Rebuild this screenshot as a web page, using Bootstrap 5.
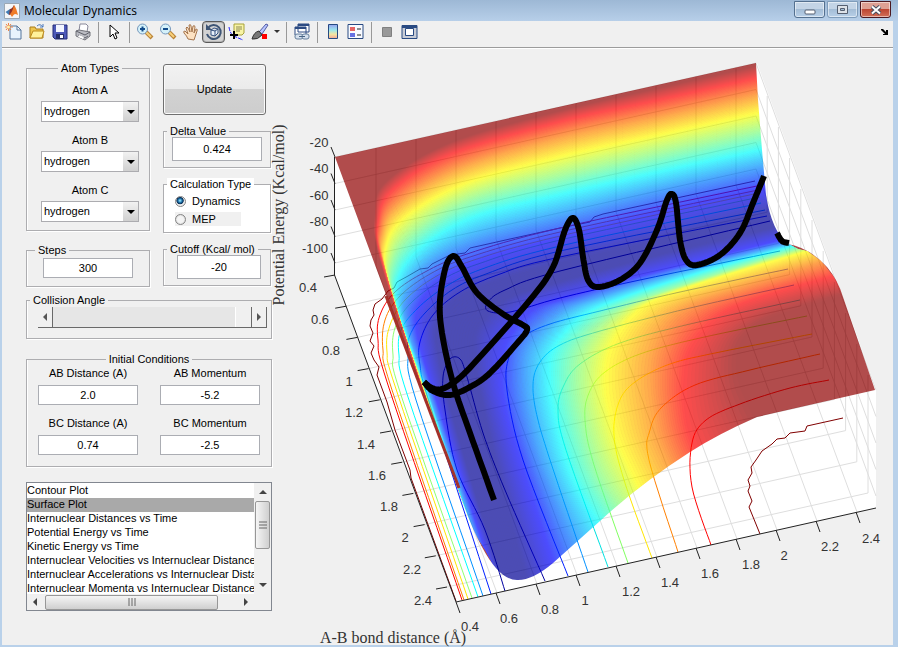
<!DOCTYPE html>
<html lang="en">
<head>
<meta charset="utf-8">
<meta name="viewport" content="width=device-width, initial-scale=1">
<title>Molecular Dynamics</title>
<link href="https://cdn.jsdelivr.net/npm/bootstrap@5.3.0/dist/css/bootstrap.min.css" rel="stylesheet">
<style>
body{font-family:"Liberation Sans",Arial,sans-serif;font-size:11px;line-height:13px;color:#000;background:#b9d1ea}
.win{min-height:100vh;border:solid #b9d1ea;border-width:0 5px 2px 2px;background:#f0f0f0}
.titlebar{height:21px;margin:0 -5px 0 -2px;padding:0 7px 0 4px;background:linear-gradient(#9db8d5,#b7cfe9)}
.titlebar h1{font:12px "Open Sans","Noto Sans",sans-serif;line-height:19px;margin:0}
.wbtn{height:17px;margin-top:1px;padding:0;border:1px solid #54708f;border-radius:0 0 3px 3px;background:linear-gradient(#c3d4e6 50%,#a4bdd6 50%,#b8d0e8);box-shadow:inset 0 0 0 1px #ffffff80;display:flex;align-items:center;justify-content:center;width:31px}
.wbtn.max-w{border-color:#7f9cba}
.wbtn.close-w{border-color:#4b1820;background:linear-gradient(#dea093 48%,#bd4632 50%,#d27059)}
.wbtns{gap:2px}
.tools{height:27px;padding-bottom:4px;border-bottom:1px solid #9c9c9c;box-shadow:0 1px #fff;padding-right:4px}
.tbtn{width:23px;height:22px;padding:0;border:1px solid transparent;border-radius:4px;background:none;display:flex;align-items:center;justify-content:center}
.tbtn.pressed{border:1px solid #5a5a5a;background:#d3d3d3;box-shadow:inset 0 0 0 1px #b5b5b5}
.tsep{width:8px;height:21px;display:flex;justify-content:center}
.tsep::before{content:"";width:1px;background:#999}
.side{width:246px;margin-left:24px;padding-top:14px;flex:none}
.cola{width:124px;gap:13px}.colb{width:108px;gap:10px}
.pairs{padding-right:1px}
.grp{border:1px solid #adadb0;box-shadow:1px 1px #fff,inset 1px 0 #fff;padding:0 11px;min-width:0}
.grp legend{float:none;width:auto;font-size:11px;line-height:12px;margin:0 auto;padding:0 3px;background:#f0f0f0;white-space:nowrap}
.grp legend.start{margin-left:-8px}
.lbl{display:block;text-align:center;line-height:16px}
.atom{padding:0 10px 8px 14px}
.atoms{gap:10px;padding-top:8px}
.atom .lbl{margin-bottom:3px}
.steps{padding:0 16px 8px}.steps .field{margin-top:2px}
.delta{padding:0 8px 6px}.cutoff{padding:0 9px 6px 13px}
.delta legend.start{margin-left:-5px}.cutoff legend.start{margin-left:-10px}
.colb .field{height:24px}
.angles{padding:1px 4px 10px 11px;margin-top:7px}
.conds{display:grid;grid-template-columns:1fr 1fr;gap:10px 22px}
.init{padding-bottom:11px;margin-top:14px}
.pick{width:100%;height:21px;border:1px solid #acacb0;border-radius:0;background:#fff url("data:image/svg+xml,%3Csvg xmlns='http://www.w3.org/2000/svg' width='15' height='19'%3E%3Cdefs%3E%3ClinearGradient id='g' y2='1' x2='0'%3E%3Cstop stop-color='%23f2f2f2'/%3E%3Cstop offset='1' stop-color='%23d0d0d0'/%3E%3C/linearGradient%3E%3C/defs%3E%3Cpath fill='url(%23g)' d='M0 0h15v19H0z'/%3E%3Cpath d='M4 8h8l-4 4z'/%3E%3C/svg%3E") right center no-repeat;appearance:none;padding:0 2px;font-size:11px}
.field{width:100%;height:20px;border:1px solid #abadb3;border-radius:0;background:#fff;text-align:center;font-size:11px;padding:0}
.update{height:51px;margin:2px 5px 0 0;border:1px solid #707070;border-radius:3px;background:linear-gradient(#f2f2f2,#ebebeb 48%,#d2d2d2 49%,#cdcdcd);box-shadow:inset 0 0 0 1px #fafafa;font-size:11px}
.calc{background:#fff;padding-bottom:6px}.calc legend{background:#fff}
.calc label{width:66px;height:14px}
.calc label.off{background:#f0f0f0}
.rd{appearance:none;width:11px;height:11px;margin:0 6px 0 0;border:1px solid #858585;border-radius:50%;background:radial-gradient(#f4f4f4 45%,#c8c8c8)}
.rd:checked{background:radial-gradient(circle at 45% 40%,#7fd3f4 8%,#13639b 30%,#0b2f55 45%,#eee 55%)}
.step{width:15px;height:21px;padding:0;border:0;border-right:1px solid #696969;border-bottom:1px solid #696969;display:flex;align-items:center;justify-content:center;background:#f0f0f0}
.angle{appearance:none;height:21px;margin:0;background:#e6e6e6;border-bottom:1px solid #696969;flex:1;min-width:0}
.angle::-webkit-slider-thumb{appearance:none;width:17px;height:20px;background:#f0f0f0;border-right:1px solid #696969;border-left:1px solid #fff}
.lbox{margin-top:15px;border:1px solid #828790;background:#fff;display:grid;grid-template-columns:1fr 17px;grid-template-rows:111px 16px}
.plist{border:0;outline:0;height:111px;padding:1px 0 0;overflow:hidden;font-size:11px;line-height:14px;min-width:0;width:100%;background:#fff}
.plist::-webkit-scrollbar{display:none}
.plist option{padding:0;min-height:14px;height:14px}
.plist option:checked{background:#a9a9a9 linear-gradient(#a9a9a9,#a9a9a9);color:#000}
.sbar{background:#f0f0f0;display:flex;align-items:center}
.sbar svg{flex:none}
.sthumb{border:1px solid #979797;border-radius:2px;display:flex;align-items:center;justify-content:center}
.vthumb{width:15px;height:48px;background:linear-gradient(90deg,#f5f5f5,#cfcfcf)}
.hthumb{height:15px;background:linear-gradient(#f5f5f5,#cfcfcf)}
.plot{display:block;width:100%;height:auto;overflow:visible}
.plot text{fill:#333}
.tk text{font:13px "Liberation Sans",Arial,sans-serif;text-anchor:middle}
.axname{font:16px "Liberation Serif","Times New Roman",serif;text-anchor:middle}
</style>
</head>
<body>
<div class="win d-flex flex-column">
<header class="titlebar d-flex justify-content-between">
 <div class="d-flex gap-1 align-items-center">
  <svg width="16" height="16" viewBox="0 0 16 16"><path d="M.5.500h15v15H.5z" fill="#f4f6f8" stroke="#9ba8b5"/><path d="M1.500 9 6 6l2 2-3 4z" fill="#3f7ab4"/><path d="M6 6q2 0 4-4l1 4-3 5-3 1z" fill="#8e3127"/><path d="M10 2q2 2 4 10-2-1-3-1t-3 3l-2-3q2-1 4-9z" fill="#ef7c29"/></svg>
  <h1>Molecular Dynamics</h1>
 </div>
 <div class="wbtns d-flex">
  <button class="wbtn" aria-label="Minimize"><svg class="mt-1" width="12" height="6"><rect x="1" y="1" width="10" height="4" rx="1" fill="#fff" stroke="#555f70"/></svg></button>
  <button class="wbtn max-w" aria-label="Maximize"><svg width="11" height="9"><path fill-rule="evenodd" d="M.5.500h10v8H.5zM3.500 3.500h4v2h-4z" fill="#dde2e8" stroke="#555f70"/></svg></button>
  <button class="wbtn close-w" aria-label="Close"><svg width="12" height="10"><path d="m2 1.500 8 7M10 1.500l-8 7" stroke="#444f60" stroke-width="4"/><path d="m2 1.500 8 7M10 1.500l-8 7" stroke="#fff" stroke-width="2"/></svg></button>
 </div>
</header>
<nav class="tools d-flex align-items-center justify-content-between" aria-label="Figure tools">
 <div class="d-flex align-items-center">
 <button class="tbtn" aria-label="New"><svg width="18" height="18"><path d="M5 3h7l4 4v9H5z" fill="#e8f3fd" stroke="#54749c"/><path d="M12 3v4h4z" fill="#fff" stroke="#54749c"/><path d="M3.500 0v8M0 4h8M1 1l5 6M6 1 1 7" stroke="#ed8547"/><circle cx="3.500" cy="4" r="1.500" fill="#fff3ae"/></svg></button>
 <button class="tbtn" aria-label="Open"><svg width="18" height="18"><path d="M2 15V4h5l1 2h7v9z" fill="#eec54e" stroke="#a97c1b"/><path d="m2 15 3-7h11l-2 7z" fill="#fff19b" stroke="#bc8a1d"/><path d="M9 3q3-3 6 1m0-3v3h-3" fill="none" stroke="#4a79bd"/></svg></button>
 <button class="tbtn" aria-label="Save"><svg width="18" height="18"><path d="M2 2h14v14H4l-2-2z" fill="#4d59b8" stroke="#242c78"/><path d="M5 2h8v7H5z" fill="#f2f5ff"/><path d="M5 11h8v5H5z" fill="#262e68"/><path d="M9 12h3v3H9z" fill="#fff"/></svg></button>
 <button class="tbtn" aria-label="Print"><svg width="18" height="18"><path d="m5 8 1-7h6l2 2-1 6z" fill="#fff" stroke="#889"/><path d="m2 8 3-1 11 2v4l-5 4-9-4z" fill="#bbbcc3" stroke="#73747b"/><path d="m2 8 9 4 5-3M4 12l7 3 3-2" fill="none" stroke="#5e6069"/><path d="m5 12 5 2-1 2-5-2z" fill="#fff"/></svg></button>
 <span class="tsep"></span>
 <button class="tbtn" aria-label="Edit plot"><svg width="12" height="17"><path d="M2 1v12l3-3 2 5 2-1-2-5h4z" fill="#fff" stroke="#000"/></svg></button>
 <span class="tsep"></span>
 <button class="tbtn" aria-label="Zoom in"><svg width="18" height="18"><path d="m10 9 6 6" stroke="#bb8437" stroke-width="4"/><path d="m10 9 5 5" stroke="#f7d17b" stroke-width="2"/><circle cx="6.500" cy="6" r="5" fill="#d4f1fa" stroke="#7597bb"/><path d="M4 6h5M6.500 3.500v5" stroke="#134c8b" stroke-width="2"/></svg></button>
 <button class="tbtn" aria-label="Zoom out"><svg width="18" height="18"><path d="m10 9 6 6" stroke="#bb8437" stroke-width="4"/><path d="m10 9 5 5" stroke="#f7d17b" stroke-width="2"/><circle cx="6.500" cy="6" r="5" fill="#d4f1fa" stroke="#7597bb"/><path d="M4 6h5" stroke="#134c8b" stroke-width="2"/></svg></button>
 <button class="tbtn" aria-label="Pan"><svg width="18" height="18"><path d="M6 16q-1-3-4-6-1-2 1-2l3 3-2-6q1-2 2 0l2 4-1-7q2-1 2 1l1 6 1-6q2-1 2 1l-1 6 2-4q2 0 1 2l-2 6-1 3z" fill="#fde2c2" stroke="#a5764e"/></svg></button>
 <button class="tbtn pressed" aria-label="Rotate 3D" aria-pressed="true"><svg width="18" height="18"><path d="M3 5a7 7 0 1 1-1 6" fill="none" stroke="#3e5575" stroke-width="2"/><path d="M1 1v6h6z" fill="#3e5575"/><path d="m6 7 3-2 4 1v4l-3 3-4-1zM6 7l4 1 3-2M10 8v5" fill="#e8f0fa" stroke="#35517e"/></svg></button>
 <button class="tbtn" aria-label="Data cursor"><svg width="18" height="18"><path d="M6 1h10v9l-2 2H6z" fill="#f8f4a5" stroke="#a7a23b"/><path d="M8 4h6M8 6h6M8 8h4" stroke="#8e8a56"/><path d="M1 4q1 8 7 10l7 3" fill="none" stroke="#22f" stroke-dasharray="4 1"/><path d="M2 12h8M6 8v8" stroke="#000" stroke-width="2"/></svg></button>
 <button class="tbtn" aria-label="Brush"><svg width="18" height="18"><path d="m8 9 7-8 2 1-6 9z" fill="#b9c6ff" stroke="#5059a4"/><path d="M8 8q-5 1-7 8 6 1 10-4z" fill="#777" stroke="#333"/><path d="M11 11h5v5h-5z" fill="#f00"/></svg></button>
 <svg width="11" height="6"><path d="M3 1h6L6 4z" fill="#333"/></svg>
 <span class="tsep"></span>
 <button class="tbtn" aria-label="Link plot"><svg width="18" height="18"><path d="M5 1h11v8H5zM2 4h11v8H2z" fill="#fff" stroke="#2c4b83"/><path d="M5 2h11M2 5h11" stroke="#2c4b83" stroke-width="2"/><rect x="2" y="11" width="8" height="5" rx="2" fill="#d5e0ed" stroke="#647f9c"/><rect x="9" y="11" width="7" height="5" rx="2" fill="#d5e0ed" stroke="#647f9c"/><path d="M6 13.500h6" stroke="#476383"/></svg></button>
 <span class="tsep"></span>
 <button class="tbtn" aria-label="Colorbar"><svg width="12" height="18"><defs><linearGradient id="cb" x2="0" y2="1"><stop stop-color="#95a0ed"/><stop offset=".4" stop-color="#9ce8ed"/><stop offset=".7" stop-color="#f5e5a1"/><stop offset="1" stop-color="#f3a699"/></linearGradient></defs><path d="M1.500 1.500h9v14h-9z" fill="url(#cb)" stroke="#264a82"/></svg></button>
 <button class="tbtn" aria-label="Legend"><svg width="17" height="18"><path d="M1 1.500h15v14H1z" fill="#f8faff" stroke="#294a82"/><path d="M3 4h5v4H3z" fill="#e66464"/><path d="M3 10h5v4H3z" fill="#6570e2"/><path d="M10 6h4M10 12h4" stroke="#222"/></svg></button>
 <span class="tsep"></span>
 <button class="tbtn" aria-label="Hide plot tools"><svg width="12" height="12"><path d="M1.500 1.500h9v9h-9z" fill="#999" stroke="#808080"/></svg></button>
 <button class="tbtn" aria-label="Show plot tools"><svg width="17" height="16"><path d="M1 1.500h15v13H1z" fill="#c8ccd6" stroke="#294a82"/><path d="M1 2.500h15" stroke="#294a82" stroke-width="3"/><path d="M4.500 4.500h8v7h-8z" fill="#fff" stroke="#294a82"/></svg></button>
 </div>
 <svg width="9" height="8"><path d="M1 1h2l3 3V2h2v5H3V6h2L1 2z"/></svg>
</nav>
<main class="d-flex align-items-start flex-grow-1">
<section class="side">
 <div class="pairs d-flex justify-content-between">
  <div class="cola d-flex flex-column">
   <fieldset class="grp atom"><legend>Atom Types</legend>
    <div class="atoms d-flex flex-column">
    <div><label class="lbl" for="a">Atom A</label><select class="pick" id="a"><option>hydrogen</option></select></div>
    <div><label class="lbl" for="b">Atom B</label><select class="pick" id="b"><option>hydrogen</option></select></div>
    <div><label class="lbl" for="c">Atom C</label><select class="pick" id="c"><option>hydrogen</option></select></div>
    </div>
   </fieldset>
   <fieldset class="grp steps"><legend class="start">Steps</legend><input class="field" aria-label="Steps" value="300"></fieldset>
  </div>
  <div class="colb d-flex flex-column">
   <button class="update">Update</button>
   <fieldset class="grp delta"><legend class="start">Delta Value</legend><input class="field" aria-label="Delta Value" value="0.424"></fieldset>
   <fieldset class="grp calc"><legend class="start">Calculation Type</legend>
    <label class="d-flex align-items-center mt-1"><input class="rd" type="radio" name="calc" checked>Dynamics</label>
    <label class="d-flex align-items-center mt-1 off"><input class="rd" type="radio" name="calc">MEP</label>
   </fieldset>
   <fieldset class="grp cutoff"><legend class="start">Cutoff (Kcal/ mol)</legend><input class="field" aria-label="Cutoff" value="-20"></fieldset>
  </div>
 </div>
 <fieldset class="grp angles"><legend class="start">Collision Angle</legend>
  <div class="d-flex"><button class="step" aria-label="Decrease"><svg width="6" height="8"><path d="M5 0v8L1 4z" fill="#555"/></svg></button><input class="angle" type="range" min="0" max="180" value="180" aria-label="Collision Angle"><button class="step" aria-label="Increase"><svg width="6" height="8"><path d="M1 0v8l4-4z" fill="#555"/></svg></button></div>
 </fieldset>
 <fieldset class="grp init"><legend>Initial Conditions</legend>
  <div class="conds">
   <div><label class="lbl mb-1" for="abd">AB Distance (A)</label><input class="field" id="abd" value="2.0"></div>
   <div><label class="lbl mb-1" for="abm">AB Momentum</label><input class="field" id="abm" value="-5.2"></div>
   <div><label class="lbl mb-1" for="bcd">BC Distance (A)</label><input class="field" id="bcd" value="0.74"></div>
   <div><label class="lbl mb-1" for="bcm">BC Momentum</label><input class="field" id="bcm" value="-2.5"></div>
  </div>
 </fieldset>
 <div class="lbox">
  <select class="plist" size="8" aria-label="Plot type"><option>Contour Plot</option><option selected>Surface Plot</option><option>Internuclear Distances vs Time</option><option>Potential Energy vs Time</option><option>Kinetic Energy vs Time</option><option>Internuclear Velocities vs Internuclear Distance</option><option>Internuclear Accelerations vs Internuclear Distance</option><option>Internuclear Momenta vs Internuclear Distance</option></select>
  <div class="sbar flex-column"><svg width="15" height="18"><path d="m4 11 4-4 4 4z" fill="#444"/></svg><div class="sthumb vthumb"><svg width="8" height="8"><path d="M0 1h8M0 4h8M0 7h8" stroke="#666"/></svg></div><svg class="mt-auto" width="15" height="18"><path d="m4 7 4 4 4-4z" fill="#444"/></svg></div>
  <div class="sbar"><svg width="18" height="16"><path d="m10 4-4 4 4 4z" fill="#444"/></svg><div class="sthumb hthumb flex-grow-1"><svg width="8" height="8"><path d="M1 0v8M4 0v8M7 0v8" stroke="#666"/></svg></div><svg width="36" height="16"><path d="m26 4 4 4-4 4z" fill="#444"/></svg></div>
  <div class="sbar"></div>
 </div>
</section>
<section class="flex-grow-1">
<svg class="plot" viewBox="272 48 621 597" role="img" aria-label="Potential energy surface with trajectory">
 <defs><clipPath id="surf"><path d="M335 157 756 63 758 100 762 150 766 195Q772 232 788 244 810 248 827 267 838 280 843 297L875 390 757 417Q718 434 690 452 640 484 600 521L553 563Q533 580 518 580 500 581 482 547 470 525 457 486L388 300Z"/></clipPath></defs>
 <path d="M335 157 757 63 876 388V508L456 602 335 275Z" fill="#fff"/>
 <g id="grid" stroke="#dedede" fill="none"></g>
 <g id="contours" fill="none"></g>
 <g id="surface" clip-path="url(#surf)" opacity=".7"><path d="M335 60H880V585H335z" fill="#900000"/></g>
 <path d="M386 296 459 488" stroke="#a5322b" stroke-width="3"/>
 <g id="netOver" stroke="#000" stroke-opacity=".03" fill="none" clip-path="url(#surf)"></g>
 <g id="path" fill="none" stroke="#000" stroke-width="6" stroke-linejoin="round"></g>
 <g id="axes" stroke="#222" fill="none"><path d="M334.500 157V275L456 602 876 508"/></g>
 <g id="ticks" class="tk"></g>
 <text class="axname" transform="translate(284 215) rotate(-90)">Potential Energy (Kcal/mol)</text>
 <text class="axname" x="393" y="643">A-B bond distance (Å)</text>
</svg>
</section>
</main>
</div>
<script>
const NS='http://www.w3.org/2000/svg';
const $=id=>document.getElementById(id);
function add(g,tag,attrs,text){const e=document.createElementNS(NS,tag);for(const k in attrs)e.setAttribute(k,attrs[k]);if(text)e.textContent=text;g.appendChild(e);return e}
const parse=s=>s.trim().split(/\s+/).map(p=>p.split(',').map(Number));
// Catmull-Rom resampling of a list of knots
function smooth(p,n=8){const o=[];for(let i=0;i<p.length-1;i++){const a=p[Math.max(i-1,0)],b=p[i],c=p[i+1],d=p[Math.min(i+2,p.length-1)];for(let j=0;j<n;j++){const t=j/n;o.push([0,1].map(k=>.5*(2*b[k]+(c[k]-a[k])*t+(2*a[k]-5*b[k]+4*c[k]-d[k])*t*t+(3*b[k]-a[k]-3*c[k]+d[k])*t*t*t)))}}o.push(p[p.length-1]);return o}
const line=p=>'M'+p.map(q=>q[0].toFixed(1)+' '+q[1].toFixed(1)).join('L');
// level curves of the surface: jet colour, then knots from the right edge round the bend to the front edge
const K=[
 ['144,0,0','758,66 660,88 560,111 450,143 386,182 375,215 381,262 425,395 461,490'],
 ['255,0,0','758,78 660,100 560,122 450,155 393,190 379,220 383,262 426,396 461,489'],
 ['255,128,0','759,95 660,117 560,138 460,168 400,203 383,232 386,268 427,397 462,493'],
 ['255,255,0','760,113 660,135 560,157 465,184 406,217 387,245 390,283 427,397 463,498'],
 ['128,255,128','761,132 660,154 560,177 470,200 415,232 393,260 394,295 428,397 465,506'],
 ['0,255,255','762,150 660,172 560,195 475,217 425,245 400,275 399,310 429,397 468,516'],
 ['0,128,255','763,168 660,191 560,217 480,238 432,262 409,290 406,320 431,397 474,530'],
 ['0,0,255','765,188 660,213 560,238 490,257 443,278 420,305 418,335 437,400 485,548'],
 ['0,0,150','770,213 660,240 560,263 500,280 458,298 438,325 440,360 460,440 503,582'],
 ['0,0,150','774,228 660,255 560,282 510,298 480,325 475,350 480,390 497,465 528,582'],
 ['0,0,255','782,240 660,271 560,300 530,312 508,340 502,370 505,405 522,465 556,570'],
 ['0,128,255','786,244 680,272 600,297 560,313 530,345 525,375 530,415 545,470 580,552'],
 ['0,255,255','791,247 700,273 620,299 580,318 553,350 550,385 557,425 574,480 606,535'],
 ['128,255,128','797,250 710,277 640,301 605,320 581,350 577,385 584,425 600,475 626,515'],
 ['255,255,0','806,252 725,276 660,298 630,318 610,350 606,385 612,420 622,450 648,505'],
 ['255,128,0','820,262 740,287 690,305 665,325 653,355 651,383 654,410 660,440 678,482'],
 ['255,0,0','832,277 765,296 727,311 703,331 688,355 684,383 685,410 690,435 702,466'],
 ['144,0,0','844,295 795,309 765,320 745,335 737,352 736,370 739,385 745,400 759,430']];
const extend=p=>{const a=p[0],b=p[1],y=p[p.length-2],z=p[p.length-1];return[[a[0]+(a[0]-b[0])*.2,a[1]+(a[1]-b[1])*.2],...p,[z[0]+(z[0]-y[0])*.2,z[1]+(z[1]-y[1])*.2]]};
const S=K.map(k=>({c:k[0].split(',').map(Number),p:extend(smooth(parse(k[1])))}));
const mix=(a,b,t)=>a.map((v,i)=>v+(b[i]-v)*t), N=14;
for(let i=0;i<S.length-1;i++)for(let j=0;j<N;j++){
 const at=t=>S[i].p.map((q,n)=>mix(q,S[i+1].p[n],t)), col=mix(S[i].c,S[i+1].c,(j+.5)/N).map(Math.round);
 add($('surface'),'path',{d:line(at(j/N).concat(at((j+1)/N).reverse()))+'Z',fill:`rgb(${col})`,stroke:`rgb(${col})`});
}
// grid on the floor and both back walls
for(const g of [$('grid'),$('netOver')]){
 let d='';
 for(let i=1;i<11;i++){d+=`M${457+40*i} ${602-9*i}l-121-327v-118`;
  const u=335+11.200*i,v=275+31.200*i;d+=`M${u} ${v}l421-94V${65+31*i}`}
 for(let i=0;i<5;i++)d+=`M335 ${157+26.500*i}l421-94 120 327`;
 add(g,'path',{d});
}
const C=[
 ['#800000','755,181 603,214 594,217 590,222 560,228 510,239 470,248 465,253 450,255 432,264 428,268 420,269 408,276 397,282 394,288 388,291 382,299 375,304 373,310 374,315 371,320 370,326 373,333 370,341 374,346 371,353 374,360 379,367 377,375 387,402 395,430 410,470 411,478 456,601',1],
 ['#f00','757,186 560,228 467,254 425,272 395,292 380,315 378,340 388,385 462,600'],
 ['#ff8000','758,190 560,232 470,257 430,274 400,296 385,320 383,350 392,390 464,600'],
 ['#ffe600','759,193 560,236 474,260 435,277 405,300 390,325 387,352 397,392 468,599'],
 ['#90ff70','760,197 560,240 478,264 440,281 410,304 395,328 393,355 401,395 472,598'],
 ['#00ffff','761,203 560,246 482,269 445,287 418,308 401,330 399,355 408,397 478,597'],
 ['#0090ff','765,210 560,251 486,274 452,290 425,313 410,335 408,355 416,400 483,596'],
 ['#0020ff','767,216 560,257 500,274 460,292 433,315 420,342 420,365 430,405 491,594'],
 ['#0000a0','505,591 485,530 457,470 445,410 443,377 450,359 460,359 467,377 483,433 505,490 545,581'],
 ['#0000a0','770,221 560,271 505,290 488,302 488,311 510,312 560,298 640,280 780,251'],
 ['#0020ff','788,269 680,292 600,311 550,324 523,337 509,357 507,390 523,460 568,576'],
 ['#0090ff','794,285 690,308 600,331 560,345 540,362 533,385 538,420 555,475 588,572'],
 ['#00e0e0','800,300 690,324 620,343 580,364 564,385 558,410 566,450 608,567'],
 ['#80ff60','807,316 700,338 640,354 605,372 589,393 585,420 594,465 628,563'],
 ['#ffe600','812,334 720,352 670,364 635,382 619,402 614,435 624,480 652,558'],
 ['#ff8000','820,354 750,370 695,385 662,407 650,430 649,460 678,552'],
 ['#f00','829,380 790,388 740,404 706,420 692,443 692,487 711,545'],
 ['#800000','843,418 807,426 805,431 790,433 785,438 777,439 772,444 762,451 756,460 751,467 752,473 748,480 750,486 748,491 752,501 749,507 760,534',1]];
for(const c of C){const p=parse(c[1]);add($('contours'),'path',{d:line(c[2]?p:smooth(p)),stroke:c[0]})}
for(const p of ['494,500 470,433 453,383 442,333 440,300 446,266 454,256 462,267 477,293 503,314 523,325 527,330 519,341 490,373 470,387 450,395 433,391 424,382','424,382 432,388 442,389 457,380 477,360 530,300 553,267 565,230 573,218 579,230 583,257 588,280 598,287 620,280 640,263 657,230 667,200 672,194 676,203 680,240 686,260 697,265 720,255 740,233 753,203 764,176','777,233 782,241 789,243'])add($('path'),'path',{d:line(smooth(parse(p)))});
let t='';
for(let i=0;i<11;i++){t+=`M${456+40*i} ${602-9*i}l4 11`;t+=`M${335+11.200*i} ${275+31.200*i}l-11 2`}
for(let i=0;i<5;i++)t+=`M335 ${157+26.500*i}l-4-10`;
add($('axes'),'path',{d:t});
const L=[['-20',319,147],['-40',319,173],['-60',319,200],['-80',319,226],['-100',315,253],['0.4',308,292],['0.6',320,324],['0.8',331,355],['1',349,386],['1.2',354,417],['1.4',366,449],['1.6',377,480],['1.8',389,511],['2',405,542],['2.2',412,574],['2.4',423,605],['0.4',470,631],['0.6',509,623],['0.8',550,614],['1',585,605],['1.2',631,596],['1.4',670,587],['1.6',710,578],['1.8',751,569],['2',784,560],['2.2',830,551],['2.4',871,543]];
for(const l of L)add($('ticks'),'text',{x:l[1],y:l[2]},l[0]);
</script>
<script src="https://cdn.jsdelivr.net/npm/bootstrap@5.3.0/dist/js/bootstrap.bundle.min.js"></script>
</body>
</html>
